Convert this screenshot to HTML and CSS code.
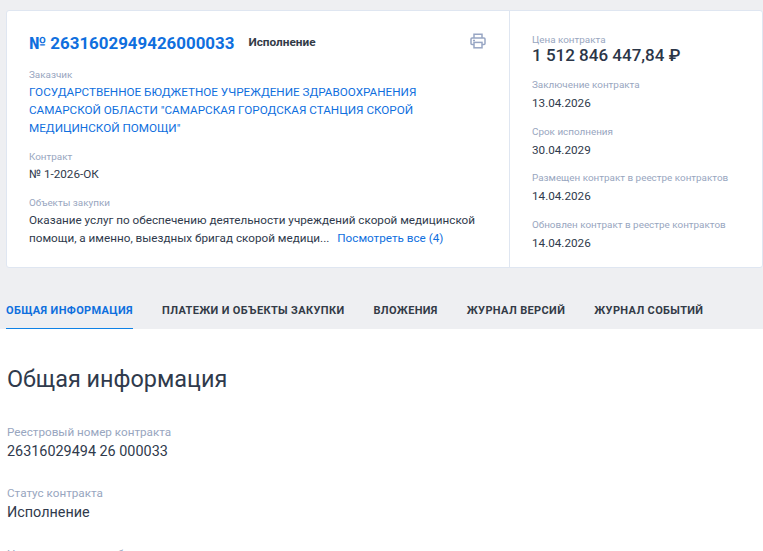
FILE: index.html
```html
<!DOCTYPE html>
<html lang="ru">
<head>
<meta charset="utf-8">
<title>Контракт</title>
<link rel="stylesheet" href="styles.css">
</head>
<body>
<div class="top">
  <section class="card">
    <div class="main">
      <div class="head">
        <a class="number">№ 2631602949426000033</a>
        <span class="badge">Исполнение</span>
        <svg class="print" width="16" height="16" viewBox="0 0 16 16" fill="none" stroke="#98a6c4" stroke-width="1.5"><path d="M4 5V1.2h8V5"/><rect x="1" y="5" width="14" height="6.6" rx="1"/><rect x="4" y="9.4" width="8" height="5.4" fill="#fff"/><path d="M3 7.4h2"/></svg>
      </div>
      <div class="label first">Заказчик</div>
      <a class="customer">ГОСУДАРСТВЕННОЕ БЮДЖЕТНОЕ УЧРЕЖДЕНИЕ ЗДРАВООХРАНЕНИЯ САМАРСКОЙ ОБЛАСТИ "САМАРСКАЯ ГОРОДСКАЯ СТАНЦИЯ СКОРОЙ МЕДИЦИНСКОЙ ПОМОЩИ"</a>
      <div class="label gap">Контракт</div>
      <div class="value">№ 1-2026-ОК</div>
      <div class="label gap">Объекты закупки</div>
      <div class="value">Оказание услуг по обеспечению деятельности учреждений скорой медицинской помощи, а именно, выездных бригад скорой медици... <a class="more">Посмотреть все (4)</a></div>
    </div>
    <aside class="side">
      <div class="item price-item">
        <div class="label">Цена контракта</div>
        <div class="price">1 512 846 447,84 ₽</div>
      </div>
      <div class="item">
        <div class="label">Заключение контракта</div>
        <div class="value">13.04.2026</div>
      </div>
      <div class="item">
        <div class="label">Срок исполнения</div>
        <div class="value">30.04.2029</div>
      </div>
      <div class="item">
        <div class="label">Размещен контракт в реестре контрактов</div>
        <div class="value">14.04.2026</div>
      </div>
      <div class="item">
        <div class="label">Обновлен контракт в реестре контрактов</div>
        <div class="value">14.04.2026</div>
      </div>
    </aside>
  </section>
  <nav class="tabs">
    <a class="tab active">ОБЩАЯ ИНФОРМАЦИЯ</a>
    <a class="tab">ПЛАТЕЖИ И ОБЪЕКТЫ ЗАКУПКИ</a>
    <a class="tab">ВЛОЖЕНИЯ</a>
    <a class="tab">ЖУРНАЛ ВЕРСИЙ</a>
    <a class="tab">ЖУРНАЛ СОБЫТИЙ</a>
  </nav>
</div>
<main class="content">
  <h1>Общая информация</h1>
  <div class="field">
    <div class="field-label">Реестровый номер контракта</div>
    <div class="field-value">26316029494 26 000033</div>
  </div>
  <div class="field">
    <div class="field-label">Статус контракта</div>
    <div class="field-value">Исполнение</div>
  </div>
  <div class="field">
    <div class="field-label">Номер извещения об осуществлении закупки</div>
  </div>
</main>
</body>
</html>
```
FILE: styles.css
```css
* { box-sizing: border-box; }
html, body { margin: 0; height: 551px; overflow: hidden; background: #fff; }
body { font-family: Roboto, "Noto Sans", sans-serif; color: #2f3a4c; }
a { color: #0f6fde; text-decoration: none; }
.top { background: #eeeff2; padding: 10px 0 0 6px; height: 329px; }
.card { display: flex; width: 757px; height: 258px; background: #fff; border: 1px solid #dfe6f1; border-radius: 3px; }
.main { width: 503px; padding: 20px 22px 0 22px; border-right: 1px solid #dfe6f1; flex: none; }
.head { display: flex; align-items: center; height: 22px; }
.number { font-size: 16.9px; font-weight: 700; color: #0f6fde; line-height: 22px; margin-top: 1px; }
.badge { font-size: 11.8px; font-weight: 700; color: #333b47; margin-left: 14px; margin-top: -1px; }
.print { margin-left: auto; margin-right: 1px; margin-top: -2px; }
.label { font-size: 9.9px; line-height: 14px; color: #98a6c0; }
.label.first { margin-top: 15px; }
.label.gap { margin-top: 13px; }
.customer { display: block; font-size: 11.7px; line-height: 18px; margin: 1px 0; }
.value { font-size: 11.7px; line-height: 18px; color: #2f3a4c; margin-top: 1px; }
.more { margin-left: 5px; }
.side { flex: 1; padding: 22px 10px 0 22px; }
.item { margin-bottom: 12.5px; }
.item .value { margin-top: 2px; }
.price { font-size: 17px; font-weight: 500; line-height: 20px; color: #2b3648; margin-top: -2px; }
.price-item { margin-bottom: 13px; }
.tabs { display: flex; gap: 29px; margin-top: 26px; height: 35px; }
.tab { display: block; height: 35px; padding-top: 10px; font-size: 11px; line-height: 14px; font-weight: 700; letter-spacing: 0.36px; color: #333b47; }
.tab.active { color: #0f6fde; border-bottom: 1px solid #0f82e6; }
.content { padding: 0 7px; }
h1 { margin: 35px 0 0; font-size: 23.4px; font-weight: 400; line-height: 30px; color: #2f3a4c; }
.field { margin-bottom: 22px; }
h1 + .field { margin-top: 30px; }
.field-label { font-size: 11.7px; line-height: 16px; color: #98a6c0; }
.field-value { font-size: 14.4px; line-height: 22px; color: #2f3a4c; margin-top: 1px; }
```
